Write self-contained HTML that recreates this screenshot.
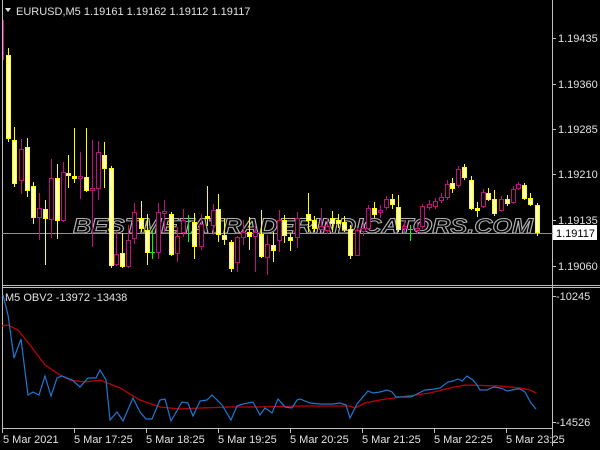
<!DOCTYPE html>
<html><head><meta charset="utf-8"><style>
html,body{margin:0;padding:0;background:#000;width:600px;height:450px;overflow:hidden}
svg{display:block}
text{font-family:"Liberation Sans",sans-serif}
</style></head><body>
<svg width="600" height="450" viewBox="0 0 600 450" xmlns="http://www.w3.org/2000/svg">
<rect width="600" height="450" fill="#000"/>
<!-- frames -->
<g stroke="#c0c0c0" stroke-width="1" fill="none" shape-rendering="crispEdges">
<line x1="2.5" y1="0" x2="2.5" y2="428"/>
<line x1="552.5" y1="0" x2="552.5" y2="446"/>
<line x1="2" y1="285.5" x2="600" y2="285.5"/>
<line x1="2" y1="287.5" x2="600" y2="287.5"/>
<line x1="2" y1="428.5" x2="553" y2="428.5"/>
</g>
<!-- price ticks -->
<g stroke="#c0c0c0" shape-rendering="crispEdges">
<line x1="552" y1="38.5" x2="556" y2="38.5"/><line x1="552" y1="84.5" x2="556" y2="84.5"/>
<line x1="552" y1="129.5" x2="556" y2="129.5"/><line x1="552" y1="174.5" x2="556" y2="174.5"/>
<line x1="552" y1="220.5" x2="556" y2="220.5"/><line x1="552" y1="266.5" x2="556" y2="266.5"/>
<line x1="552" y1="296.5" x2="556" y2="296.5"/><line x1="552" y1="422.5" x2="556" y2="422.5"/>
<line x1="2.5" y1="428" x2="2.5" y2="433"/><line x1="74.5" y1="428" x2="74.5" y2="433"/>
<line x1="146.5" y1="428" x2="146.5" y2="433"/><line x1="218.5" y1="428" x2="218.5" y2="433"/>
<line x1="290.5" y1="428" x2="290.5" y2="433"/><line x1="362.5" y1="428" x2="362.5" y2="433"/>
<line x1="434.5" y1="428" x2="434.5" y2="433"/><line x1="506.5" y1="428" x2="506.5" y2="433"/>
</g>
<g fill="#e0e0e0" font-size="11">
<text x="558" y="42">1.19435</text><text x="558" y="88">1.19360</text>
<text x="558" y="133">1.19285</text><text x="558" y="178">1.19210</text>
<text x="558" y="224">1.19135</text><text x="558" y="270">1.19060</text>
<text x="556" y="300">-10245</text><text x="556" y="426">-14526</text>
<text x="3" y="443">5 Mar 2021</text><text x="74" y="443">5 Mar 17:25</text>
<text x="146" y="443">5 Mar 18:25</text><text x="218" y="443">5 Mar 19:25</text>
<text x="290" y="443">5 Mar 20:25</text><text x="362" y="443">5 Mar 21:25</text>
<text x="434" y="443">5 Mar 22:25</text><text x="506" y="443">5 Mar 23:25</text>
<text x="16" y="15">EURUSD,M5  1.19161 1.19162 1.19112 1.19117</text>
<text x="5" y="301">M5 OBV2 -13972 -13438</text>
</g>
<polygon points="5,8 11,8 8,12" fill="#e0e0e0"/>
<!-- watermark -->
<text x="73" y="233" font-size="21" font-weight="bold" font-style="italic" fill="none" stroke="#b0b0b0" stroke-width="1" textLength="460" lengthAdjust="spacingAndGlyphs">BESTMETATRADERINDICATORS.COM</text>
<!-- current price line -->
<line x1="2" y1="233.5" x2="553" y2="233.5" stroke="#909090" shape-rendering="crispEdges"/>
<rect x="553" y="225" width="44" height="15" fill="#fff"/>
<text x="556" y="237" font-size="11" fill="#000">1.19117</text>
<!-- wicks -->
<g stroke-width="1" shape-rendering="crispEdges">
<g stroke="#ffff00">
<line x1="8.5" y1="48" x2="8.5" y2="142"/><line x1="14.5" y1="127" x2="14.5" y2="187"/><line x1="27.5" y1="138" x2="27.5" y2="197"/>
<line x1="33.5" y1="182" x2="33.5" y2="224"/><line x1="45.5" y1="200" x2="45.5" y2="265"/><line x1="57.5" y1="164" x2="57.5" y2="239"/>
<line x1="68.5" y1="155" x2="68.5" y2="188"/><line x1="74.5" y1="128" x2="74.5" y2="183"/><line x1="86.5" y1="128" x2="86.5" y2="192"/>
<line x1="104.5" y1="142" x2="104.5" y2="188"/><line x1="111.5" y1="166" x2="111.5" y2="268"/><line x1="122.5" y1="233" x2="122.5" y2="268"/>
<line x1="141.5" y1="201" x2="141.5" y2="232"/><line x1="147.5" y1="214" x2="147.5" y2="265"/><line x1="171.5" y1="212" x2="171.5" y2="256"/>
<line x1="194.5" y1="213" x2="194.5" y2="259"/><line x1="207.5" y1="186" x2="207.5" y2="226"/><line x1="218.5" y1="194" x2="218.5" y2="242"/>
<line x1="224.5" y1="219" x2="224.5" y2="245"/><line x1="231.5" y1="240" x2="231.5" y2="272"/><line x1="249.5" y1="217" x2="249.5" y2="250"/>
<line x1="261.5" y1="210" x2="261.5" y2="258"/><line x1="273.5" y1="232" x2="273.5" y2="262"/><line x1="284.5" y1="215" x2="284.5" y2="243"/>
<line x1="290.5" y1="233" x2="290.5" y2="251"/><line x1="308.5" y1="193" x2="308.5" y2="232"/><line x1="314.5" y1="216" x2="314.5" y2="232"/>
<line x1="332.5" y1="211" x2="332.5" y2="232"/><line x1="338.5" y1="214" x2="338.5" y2="228"/><line x1="344.5" y1="216" x2="344.5" y2="232"/>
<line x1="350.5" y1="225" x2="350.5" y2="259"/><line x1="374.5" y1="202" x2="374.5" y2="218"/><line x1="392.5" y1="194" x2="392.5" y2="209"/>
<line x1="398.5" y1="195" x2="398.5" y2="232"/><line x1="452.5" y1="178" x2="452.5" y2="193"/><line x1="464.5" y1="164" x2="464.5" y2="180"/>
<line x1="471.5" y1="176" x2="471.5" y2="210"/><line x1="477.5" y1="202" x2="477.5" y2="217"/><line x1="488.5" y1="188" x2="488.5" y2="201"/>
<line x1="494.5" y1="190" x2="494.5" y2="216"/><line x1="507.5" y1="195" x2="507.5" y2="206"/><line x1="524.5" y1="183" x2="524.5" y2="200"/>
<line x1="530.5" y1="193" x2="530.5" y2="206"/><line x1="537.5" y1="203" x2="537.5" y2="236"/>
</g>
<g stroke="#c0107f">
<line x1="3.5" y1="20" x2="3.5" y2="60"/>
<line x1="21.5" y1="139" x2="21.5" y2="194"/><line x1="39.5" y1="193" x2="39.5" y2="240"/><line x1="51.5" y1="159" x2="51.5" y2="238"/>
<line x1="63.5" y1="162" x2="63.5" y2="222"/><line x1="80.5" y1="152" x2="80.5" y2="199"/><line x1="92.5" y1="140" x2="92.5" y2="247"/>
<line x1="98.5" y1="141" x2="98.5" y2="200"/><line x1="116.5" y1="231" x2="116.5" y2="266"/><line x1="128.5" y1="225" x2="128.5" y2="268"/>
<line x1="134.5" y1="203" x2="134.5" y2="244"/><line x1="158.5" y1="203" x2="158.5" y2="259"/><line x1="164.5" y1="200" x2="164.5" y2="232"/>
<line x1="177.5" y1="227" x2="177.5" y2="262"/><line x1="183.5" y1="209" x2="183.5" y2="237"/><line x1="201.5" y1="214" x2="201.5" y2="250"/>
<line x1="213.5" y1="204" x2="213.5" y2="235"/><line x1="237.5" y1="236" x2="237.5" y2="272"/><line x1="243.5" y1="220" x2="243.5" y2="245"/>
<line x1="255.5" y1="225" x2="255.5" y2="272"/><line x1="267.5" y1="235" x2="267.5" y2="275"/><line x1="279.5" y1="210" x2="279.5" y2="252"/>
<line x1="297.5" y1="212" x2="297.5" y2="248"/><line x1="321.5" y1="208" x2="321.5" y2="233"/><line x1="327.5" y1="218" x2="327.5" y2="234"/>
<line x1="357.5" y1="228" x2="357.5" y2="256"/><line x1="363.5" y1="222" x2="363.5" y2="236"/><line x1="368.5" y1="205" x2="368.5" y2="230"/>
<line x1="380.5" y1="205" x2="380.5" y2="218"/><line x1="386.5" y1="196" x2="386.5" y2="210"/><line x1="404.5" y1="220" x2="404.5" y2="232"/>
<line x1="417.5" y1="222" x2="417.5" y2="234"/><line x1="422.5" y1="204" x2="422.5" y2="229"/><line x1="429.5" y1="200" x2="429.5" y2="210"/>
<line x1="435.5" y1="198" x2="435.5" y2="209"/><line x1="441.5" y1="193" x2="441.5" y2="203"/><line x1="447.5" y1="180" x2="447.5" y2="200"/>
<line x1="458.5" y1="166" x2="458.5" y2="188"/><line x1="483.5" y1="189" x2="483.5" y2="208"/><line x1="501.5" y1="196" x2="501.5" y2="212"/>
<line x1="513.5" y1="186" x2="513.5" y2="204"/><line x1="518.5" y1="182" x2="518.5" y2="190"/>
</g>
<g stroke="#00ff00">
<line x1="152.5" y1="230" x2="152.5" y2="259"/><line x1="188.5" y1="215" x2="188.5" y2="242"/><line x1="410.5" y1="225" x2="410.5" y2="241"/>
</g>
</g>
<!-- bull bodies -->
<g fill="#ffffc0" stroke="#ffff00" shape-rendering="crispEdges">
<rect x="6.5" y="55.5" width="4" height="83"/><rect x="12.5" y="140.5" width="4" height="43"/><rect x="25.5" y="147.5" width="4" height="43"/>
<rect x="31.5" y="186.5" width="4" height="31"/><rect x="43.5" y="209.5" width="4" height="9"/><rect x="55.5" y="178.5" width="4" height="42"/>
<rect x="66.5" y="173.5" width="4" height="2"/><rect x="72.5" y="176.5" width="4" height="2"/><rect x="84.5" y="177.5" width="4" height="13"/>
<rect x="102.5" y="155.5" width="4" height="13"/><rect x="109.5" y="168.5" width="4" height="97"/><rect x="120.5" y="253.5" width="4" height="13"/>
<rect x="139.5" y="218.5" width="4" height="10"/><rect x="145.5" y="230.5" width="4" height="22"/><rect x="169.5" y="214.5" width="4" height="40"/>
<rect x="192.5" y="222.5" width="4" height="24"/><rect x="205.5" y="216.5" width="4" height="2"/><rect x="216.5" y="209.5" width="4" height="25"/>
<rect x="222.5" y="235.5" width="4" height="4"/><rect x="229.5" y="242.5" width="4" height="26"/><rect x="247.5" y="232.5" width="4" height="4"/>
<rect x="259.5" y="234.5" width="4" height="22"/><rect x="271.5" y="245.5" width="4" height="5"/><rect x="282.5" y="220.5" width="4" height="15"/>
<rect x="288.5" y="237.5" width="4" height="3"/><rect x="306.5" y="214.5" width="4" height="6"/><rect x="312.5" y="220.5" width="4" height="8"/>
<rect x="330.5" y="218.5" width="4" height="5"/><rect x="336.5" y="220.5" width="4" height="3"/><rect x="342.5" y="222.5" width="4" height="7"/>
<rect x="348.5" y="229.5" width="4" height="26"/><rect x="372.5" y="208.5" width="4" height="6"/><rect x="390.5" y="199.5" width="4" height="5"/>
<rect x="396.5" y="207.5" width="4" height="22"/><rect x="450.5" y="183.5" width="4" height="5"/><rect x="462.5" y="167.5" width="4" height="10"/>
<rect x="469.5" y="180.5" width="4" height="28"/><rect x="475.5" y="208.5" width="4" height="2"/><rect x="486.5" y="193.5" width="4" height="6"/>
<rect x="492.5" y="199.5" width="4" height="14"/><rect x="505.5" y="199.5" width="4" height="4"/><rect x="522.5" y="185.5" width="4" height="13"/>
<rect x="528.5" y="198.5" width="4" height="6"/><rect x="535.5" y="205.5" width="4" height="27"/>
</g>
<!-- bear bodies -->
<g fill="#000" stroke="#c0107f" shape-rendering="crispEdges">
<rect x="19.5" y="149.5" width="4" height="31"/><rect x="37.5" y="208.5" width="4" height="9"/><rect x="49.5" y="178.5" width="4" height="41"/>
<rect x="61.5" y="172.5" width="4" height="48"/><rect x="78.5" y="176.5" width="4" height="2"/><rect x="90.5" y="188.5" width="4" height="2"/>
<rect x="96.5" y="152.5" width="4" height="36"/><rect x="114.5" y="254.5" width="4" height="10"/><rect x="126.5" y="240.5" width="4" height="26"/>
<rect x="132.5" y="212.5" width="4" height="26"/><rect x="156.5" y="212.5" width="4" height="40"/><rect x="162.5" y="211.5" width="4" height="2"/>
<rect x="175.5" y="236.5" width="4" height="17"/><rect x="181.5" y="220.5" width="4" height="12"/><rect x="199.5" y="224.5" width="4" height="22"/>
<rect x="211.5" y="210.5" width="4" height="15"/><rect x="235.5" y="237.5" width="4" height="25"/><rect x="241.5" y="232.5" width="4" height="5"/>
<rect x="253.5" y="232.5" width="4" height="4"/><rect x="265.5" y="244.5" width="4" height="13"/><rect x="277.5" y="220.5" width="4" height="20"/>
<rect x="295.5" y="218.5" width="4" height="19"/><rect x="319.5" y="226.5" width="4" height="3"/><rect x="325.5" y="226.5" width="4" height="4"/>
<rect x="355.5" y="230.5" width="4" height="25"/><rect x="361.5" y="228.5" width="4" height="3"/><rect x="366.5" y="208.5" width="4" height="20"/>
<rect x="378.5" y="210.5" width="4" height="2"/><rect x="384.5" y="199.5" width="4" height="8"/><rect x="402.5" y="226.5" width="4" height="2"/>
<rect x="415.5" y="228.5" width="4" height="2"/><rect x="420.5" y="206.5" width="4" height="20"/><rect x="427.5" y="204.5" width="4" height="3"/>
<rect x="433.5" y="201.5" width="4" height="5"/><rect x="439.5" y="197.5" width="4" height="3"/><rect x="445.5" y="184.5" width="4" height="13"/>
<rect x="456.5" y="169.5" width="4" height="16"/><rect x="481.5" y="192.5" width="4" height="14"/><rect x="499.5" y="199.5" width="4" height="11"/>
<rect x="511.5" y="189.5" width="4" height="13"/><rect x="516.5" y="184.5" width="4" height="4"/>
</g>
<g stroke="#00ff00" shape-rendering="crispEdges"><line x1="150" y1="252.5" x2="155" y2="252.5"/><line x1="186" y1="221.5" x2="191" y2="221.5"/><line x1="408" y1="229.5" x2="413" y2="229.5"/></g>
<!-- OBV -->
<polyline fill="none" stroke="#c00000" stroke-width="1.3" points="2,326 8,325 18,330 30,345 45,365 60,375 70,380 85,382 100,380 120,388 140,400 160,407 180,409 200,408 230,407 260,407 300,406 350,406 355,408 365,403 380,400 400,397 430,393 450,388 465,385 500,386 520,388 530,390 536,393"/>
<polyline fill="none" stroke="#1e78d0" stroke-width="1.2" points="3,295 8,315 14,358 21,339 28,395 33,392 39,395 45,376 51,396 57,378 62,376 72,380 80,387 88,378 96,378 100,370 106,380 110,420 117,412 123,421 133,398 140,412 146,419 152,419 160,400 165,399 171,421 182,402 188,403 193,416 200,401 207,400 212,395 222,405 231,420 237,406 243,404 253,402 260,415 265,408 272,413 278,399 285,407 292,408 297,400 300,399 310,403 320,404 333,404 340,403 346,405 350,418 357,404 368,391 373,393 380,392 387,390 392,392 396,397 410,397 413,396 425,390 435,389 440,388 448,382 453,381 458,379 462,381 467,376 473,380 477,385 480,390 487,390 491,388 494,387 500,388 503,389 507,391 512,390 517,389 520,389 525,392 531,403 536,409"/>
</svg>
</body></html>
